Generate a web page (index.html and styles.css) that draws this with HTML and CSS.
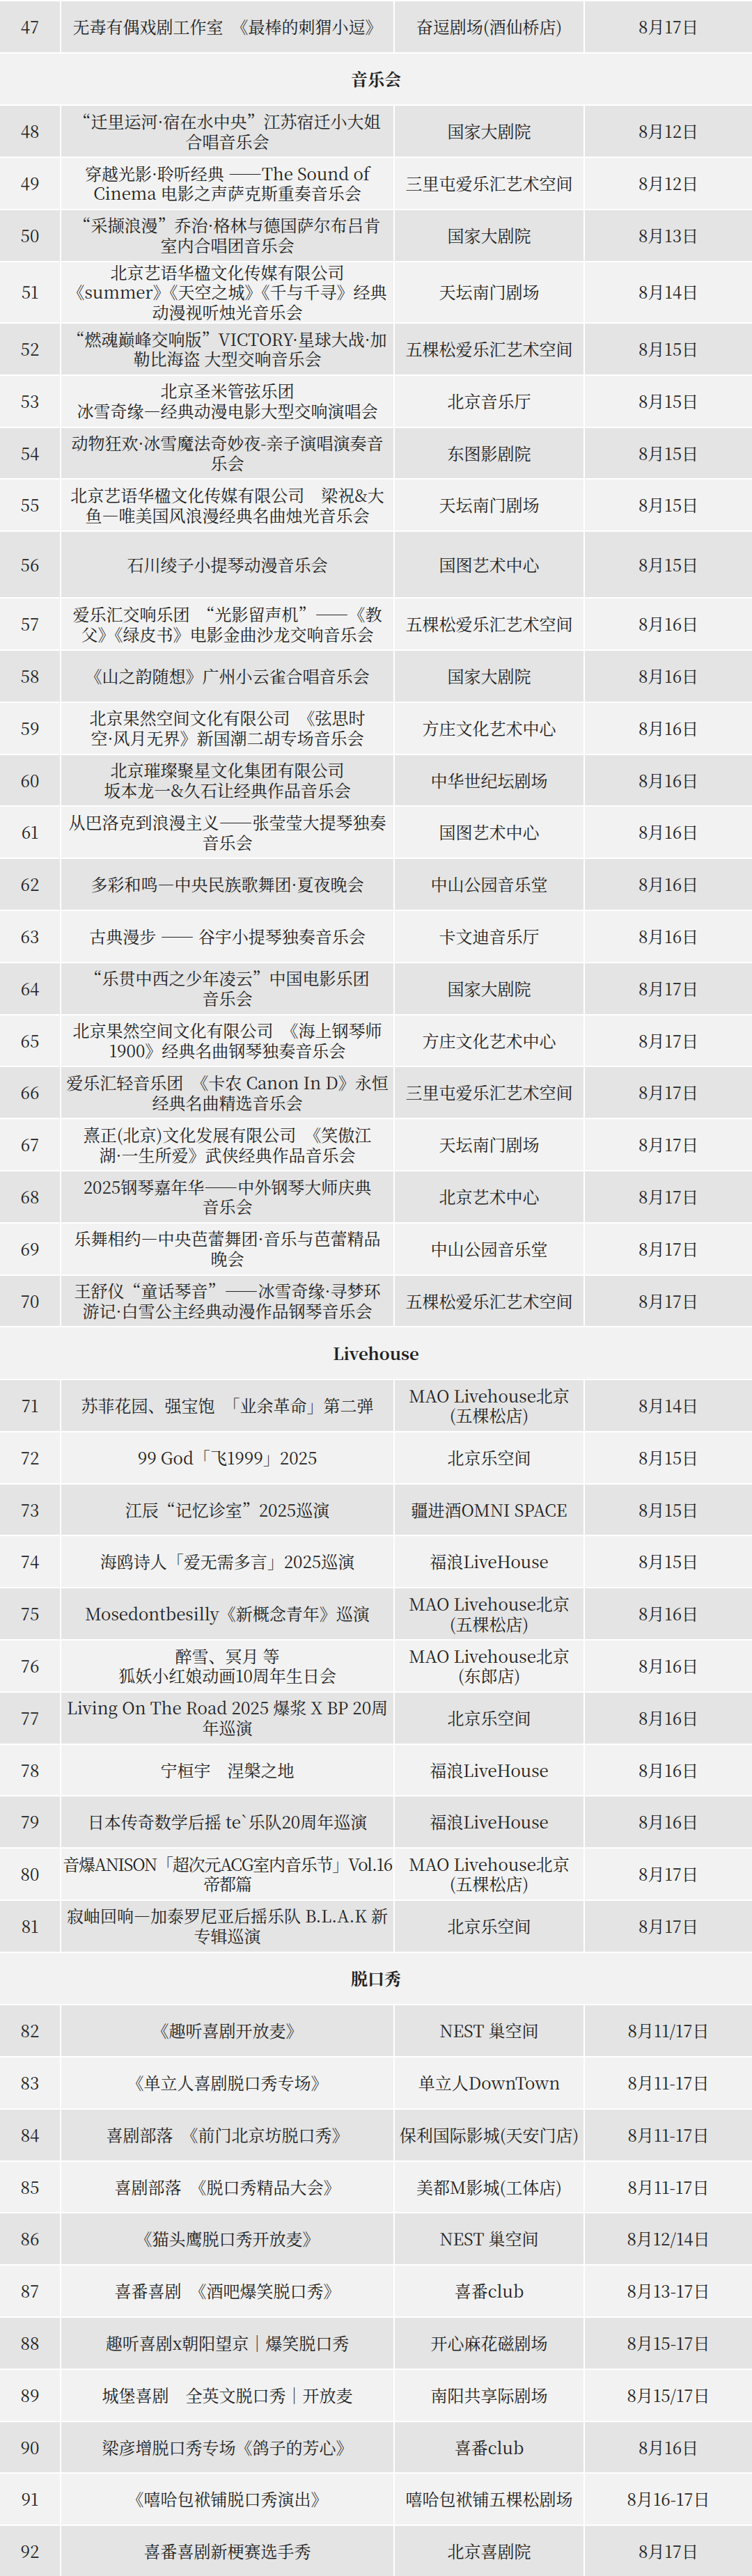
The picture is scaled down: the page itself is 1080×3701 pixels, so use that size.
FILE: index.html
```html
<!DOCTYPE html>
<html lang="zh-CN">
<head>
<meta charset="utf-8">
<title>演出安排</title>
<link rel="stylesheet" href="styles.css">
</head>
<body>
<table class="schedule">
  <colgroup>
    <col class="c-no">
    <col class="c-name">
    <col class="c-venue">
    <col class="c-date">
  </colgroup>
  <tbody>
    <tr><td>47</td><td>无毒有偶戏剧工作室　《最棒的刺猬小逗》</td><td>奋逗剧场(酒仙桥店)</td><td>8月17日</td></tr>
    <tr class="section"><td colspan="4">音乐会</td></tr>
    <tr><td>48</td><td>“迁里运河·宿在水中央”江苏宿迁小大姐<br>合唱音乐会</td><td>国家大剧院</td><td>8月12日</td></tr>
    <tr><td>49</td><td>穿越光影·聆听经典 ——The Sound of<br>Cinema 电影之声萨克斯重奏音乐会</td><td>三里屯爱乐汇艺术空间</td><td>8月12日</td></tr>
    <tr><td>50</td><td>“采撷浪漫”乔治·格林与德国萨尔布吕肯<br>室内合唱团音乐会</td><td>国家大剧院</td><td>8月13日</td></tr>
    <tr><td>51</td><td>北京艺语华楹文化传媒有限公司<br>《summer》《天空之城》《千与千寻》经典<br>动漫视听烛光音乐会</td><td>天坛南门剧场</td><td>8月14日</td></tr>
    <tr><td>52</td><td>“燃魂巅峰交响版”VICTORY·星球大战·加<br>勒比海盗 大型交响音乐会</td><td>五棵松爱乐汇艺术空间</td><td>8月15日</td></tr>
    <tr><td>53</td><td>北京圣米管弦乐团<br>冰雪奇缘—经典动漫电影大型交响演唱会</td><td>北京音乐厅</td><td>8月15日</td></tr>
    <tr><td>54</td><td>动物狂欢·冰雪魔法奇妙夜-亲子演唱演奏音<br>乐会</td><td>东图影剧院</td><td>8月15日</td></tr>
    <tr><td>55</td><td>北京艺语华楹文化传媒有限公司　梁祝&amp;大<br>鱼—唯美国风浪漫经典名曲烛光音乐会</td><td>天坛南门剧场</td><td>8月15日</td></tr>
    <tr class="tall"><td>56</td><td>石川绫子小提琴动漫音乐会</td><td>国图艺术中心</td><td>8月15日</td></tr>
    <tr><td>57</td><td>爱乐汇交响乐团　“光影留声机”——《教<br>父》《绿皮书》电影金曲沙龙交响音乐会</td><td>五棵松爱乐汇艺术空间</td><td>8月16日</td></tr>
    <tr><td>58</td><td>《山之韵随想》广州小云雀合唱音乐会</td><td>国家大剧院</td><td>8月16日</td></tr>
    <tr><td>59</td><td>北京果然空间文化有限公司　《弦思时<br>空·风月无界》新国潮二胡专场音乐会</td><td>方庄文化艺术中心</td><td>8月16日</td></tr>
    <tr><td>60</td><td>北京璀璨聚星文化集团有限公司<br>坂本龙一&amp;久石让经典作品音乐会</td><td>中华世纪坛剧场</td><td>8月16日</td></tr>
    <tr><td>61</td><td>从巴洛克到浪漫主义——张莹莹大提琴独奏<br>音乐会</td><td>国图艺术中心</td><td>8月16日</td></tr>
    <tr><td>62</td><td>多彩和鸣—中央民族歌舞团·夏夜晚会</td><td>中山公园音乐堂</td><td>8月16日</td></tr>
    <tr><td>63</td><td>古典漫步 —— 谷宇小提琴独奏音乐会</td><td>卡文迪音乐厅</td><td>8月16日</td></tr>
    <tr><td>64</td><td>“乐贯中西之少年凌云”中国电影乐团<br>音乐会</td><td>国家大剧院</td><td>8月17日</td></tr>
    <tr><td>65</td><td>北京果然空间文化有限公司　《海上钢琴师<br>1900》经典名曲钢琴独奏音乐会</td><td>方庄文化艺术中心</td><td>8月17日</td></tr>
    <tr><td>66</td><td>爱乐汇轻音乐团　《卡农 Canon In D》永恒<br>经典名曲精选音乐会</td><td>三里屯爱乐汇艺术空间</td><td>8月17日</td></tr>
    <tr><td>67</td><td>熹正(北京)文化发展有限公司　《笑傲江<br>湖·一生所爱》武侠经典作品音乐会</td><td>天坛南门剧场</td><td>8月17日</td></tr>
    <tr><td>68</td><td>2025钢琴嘉年华——中外钢琴大师庆典<br>音乐会</td><td>北京艺术中心</td><td>8月17日</td></tr>
    <tr><td>69</td><td>乐舞相约—中央芭蕾舞团·音乐与芭蕾精品<br>晚会</td><td>中山公园音乐堂</td><td>8月17日</td></tr>
    <tr><td>70</td><td>王舒仪“童话琴音”——冰雪奇缘·寻梦环<br>游记·白雪公主经典动漫作品钢琴音乐会</td><td>五棵松爱乐汇艺术空间</td><td>8月17日</td></tr>
    <tr class="section"><td colspan="4">Livehouse</td></tr>
    <tr><td>71</td><td>苏菲花园、强宝饱　「业余革命」第二弹</td><td>MAO Livehouse北京<br>(五棵松店)</td><td>8月14日</td></tr>
    <tr><td>72</td><td>99 God「飞1999」2025</td><td>北京乐空间</td><td>8月15日</td></tr>
    <tr><td>73</td><td>江辰“记忆诊室”2025巡演</td><td>疆进酒OMNI SPACE</td><td>8月15日</td></tr>
    <tr><td>74</td><td>海鸥诗人「爱无需多言」2025巡演</td><td>福浪LiveHouse</td><td>8月15日</td></tr>
    <tr><td>75</td><td>Mosedontbesilly《新概念青年》巡演</td><td>MAO Livehouse北京<br>(五棵松店)</td><td>8月16日</td></tr>
    <tr><td>76</td><td>醉雪、冥月 等<br>狐妖小红娘动画10周年生日会</td><td>MAO Livehouse北京<br>(东郎店)</td><td>8月16日</td></tr>
    <tr><td>77</td><td>Living On The Road 2025 爆浆 X BP 20周<br>年巡演</td><td>北京乐空间</td><td>8月16日</td></tr>
    <tr><td>78</td><td>宁桓宇　涅槃之地</td><td>福浪LiveHouse</td><td>8月16日</td></tr>
    <tr><td>79</td><td>日本传奇数学后摇 te`乐队20周年巡演</td><td>福浪LiveHouse</td><td>8月16日</td></tr>
    <tr><td>80</td><td class="tight">音爆ANISON「超次元ACG室内音乐节」Vol.16<br>帝都篇</td><td>MAO Livehouse北京<br>(五棵松店)</td><td>8月17日</td></tr>
    <tr><td>81</td><td>寂岫回响—加泰罗尼亚后摇乐队 B.L.A.K 新<br>专辑巡演</td><td>北京乐空间</td><td>8月17日</td></tr>
    <tr class="section"><td colspan="4">脱口秀</td></tr>
    <tr><td>82</td><td>《趣听喜剧开放麦》</td><td>NEST 巢空间</td><td>8月11/17日</td></tr>
    <tr><td>83</td><td>《单立人喜剧脱口秀专场》</td><td>单立人DownTown</td><td>8月11-17日</td></tr>
    <tr><td>84</td><td>喜剧部落　《前门北京坊脱口秀》</td><td>保利国际影城(天安门店)</td><td>8月11-17日</td></tr>
    <tr><td>85</td><td>喜剧部落　《脱口秀精品大会》</td><td>美都M影城(工体店)</td><td>8月11-17日</td></tr>
    <tr><td>86</td><td>《猫头鹰脱口秀开放麦》</td><td>NEST 巢空间</td><td>8月12/14日</td></tr>
    <tr><td>87</td><td>喜番喜剧　《酒吧爆笑脱口秀》</td><td>喜番club</td><td>8月13-17日</td></tr>
    <tr><td>88</td><td>趣听喜剧x朝阳望京｜爆笑脱口秀</td><td>开心麻花磁剧场</td><td>8月15-17日</td></tr>
    <tr><td>89</td><td>城堡喜剧　全英文脱口秀｜开放麦</td><td>南阳共享际剧场</td><td>8月15/17日</td></tr>
    <tr><td>90</td><td>梁彦增脱口秀专场《鸽子的芳心》</td><td>喜番club</td><td>8月16日</td></tr>
    <tr><td>91</td><td>《嘻哈包袱铺脱口秀演出》</td><td>嘻哈包袱铺五棵松剧场</td><td>8月16-17日</td></tr>
    <tr><td>92</td><td>喜番喜剧新梗赛选手秀</td><td>北京喜剧院</td><td>8月17日</td></tr>
  </tbody>
</table>
</body>
</html>
```

FILE: styles.css
```css
html, body {
  margin: 0;
  padding: 0;
  background: #ffffff;
}

body {
  overflow-x: hidden;
  font-family: "Noto Serif CJK SC", "Liberation Serif", "Noto Sans CJK SC", serif;
  color: #222222;
}

.schedule {
  width: 1084px;
  margin: 0 -2px;
  table-layout: fixed;
  border-collapse: separate;
  border-spacing: 2px;
  font-size: 24px;
  line-height: 28.8px;
}

.c-no { width: 86px; }
.c-name { width: 477px; }
.c-venue { width: 271px; }
.c-date { width: 240px; }

.schedule td {
  height: 72.8px;
  padding: 0 2px;
  text-align: center;
  vertical-align: middle;
  white-space: nowrap;
  overflow: visible;
}

.schedule td.tight {
  letter-spacing: -1.2px;
}

.schedule tr:nth-child(odd) td {
  background: #e4e4e4;
}

.schedule tr:nth-child(even) td {
  background: #f2f2f2;
}

.schedule tr.tall td {
  height: 94px;
}

.schedule tr.section td {
  font-weight: bold;
  height: 73.5px;
}
```
